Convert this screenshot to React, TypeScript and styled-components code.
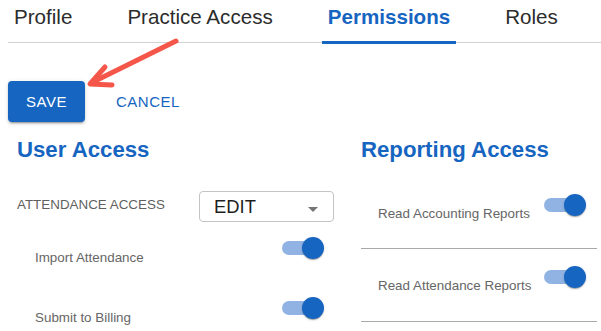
import React from "react"
import styled, { createGlobalStyle } from "styled-components"

const BLUE = "#1665c1"

const GlobalStyle = createGlobalStyle`
  html, body {
    margin: 0;
    padding: 0;
    background: #fff;
  }
  body {
    font-family: "Liberation Sans", Arial, sans-serif;
  }
`

function App() {
  const tabs = ["Profile", "Practice Access", "Permissions", "Roles"]
  const activeTab = "Permissions"

  return (
    <Page>
      <GlobalStyle />
      <TabBar>
        {tabs.map((tab) => (
          <Tab key={tab} active={tab === activeTab}>
            {tab}
          </Tab>
        ))}
      </TabBar>

      <ArrowMark width="105" height="55" viewBox="0 0 105 55">
        <g
          fill="none"
          stroke="#f4574a"
          strokeWidth="5"
          strokeLinecap="round"
          strokeLinejoin="round"
        >
          <line x1="96" y1="6" x2="13" y2="47" />
          <polyline points="25,32 10,49 32,50" />
        </g>
      </ArrowMark>

      <Actions>
        <SaveButton>Save</SaveButton>
        <CancelButton>Cancel</CancelButton>
      </Actions>

      <Columns>
        <LeftColumn>
          <Heading>User Access</Heading>
          <AccessRow>
            <AccessLabel>Attendance Access</AccessLabel>
            <Select>
              <span>EDIT</span>
              <Caret />
            </Select>
          </AccessRow>
          <ToggleRow>
            <ToggleLabel>Import Attendance</ToggleLabel>
            <Switch />
          </ToggleRow>
          <ToggleRow>
            <ToggleLabel>Submit to Billing</ToggleLabel>
            <Switch />
          </ToggleRow>
        </LeftColumn>

        <RightColumn>
          <Heading>Reporting Access</Heading>
          <ReportRow first>
            <ToggleLabel>Read Accounting Reports</ToggleLabel>
            <Switch />
          </ReportRow>
          <ReportRow>
            <ToggleLabel>Read Attendance Reports</ToggleLabel>
            <Switch />
          </ReportRow>
        </RightColumn>
      </Columns>
    </Page>
  )
}

const Switch = () => (
  <SwitchRoot>
    <Track />
    <Thumb />
  </SwitchRoot>
)

const Page = styled.div`
  position: relative;
  width: 601px;
  height: 331px;
  overflow: hidden;
  padding-left: 8px;
  box-sizing: border-box;
`

const TabBar = styled.div`
  display: flex;
  gap: 43px;
  height: 42px;
  border-bottom: 1px solid #d2d2d2;
`

const Tab = styled.div<{ active?: boolean }>`
  position: relative;
  padding: 5px 6px 0 6px;
  font-size: 20.6px;
  line-height: 23px;
  font-weight: ${(p) => (p.active ? 700 : 400)};
  color: ${(p) => (p.active ? BLUE : "#2c2c2c")};

  &::after {
    content: "";
    display: ${(p) => (p.active ? "block" : "none")};
    position: absolute;
    left: 0;
    right: 0;
    bottom: -2px;
    height: 3px;
    background: ${BLUE};
  }
`

const ArrowMark = styled.svg`
  position: absolute;
  left: 80px;
  top: 35px;
`

const Actions = styled.div`
  display: flex;
  align-items: center;
  margin-top: 38px;
`

const SaveButton = styled.button`
  width: 77px;
  height: 41px;
  border: none;
  border-radius: 4px;
  background: ${BLUE};
  color: #fff;
  font-family: inherit;
  font-size: 15px;
  letter-spacing: 0.5px;
  text-transform: uppercase;
  box-shadow: 0 3px 1px -2px rgba(0, 0, 0, 0.2), 0 2px 2px 0 rgba(0, 0, 0, 0.14),
    0 1px 5px 0 rgba(0, 0, 0, 0.12);
  padding: 0;
`

const CancelButton = styled.button`
  margin-left: 23px;
  padding: 0 8px;
  height: 36px;
  border: none;
  background: transparent;
  color: ${BLUE};
  font-family: inherit;
  font-size: 15px;
  letter-spacing: 0.5px;
  text-transform: uppercase;
`

const Columns = styled.div`
  display: grid;
  grid-template-columns: 332px 237px;
  column-gap: 20px;
  margin-top: 15px;
`

const LeftColumn = styled.div`
  padding: 0 6px 0 9px;
`

const RightColumn = styled.div`
  padding-left: 1px;
`

const Heading = styled.h2`
  margin: 0;
  font-size: 22.2px;
  line-height: 26px;
  font-weight: 700;
  color: ${BLUE};
`

const AccessRow = styled.div`
  display: flex;
  align-items: flex-start;
  margin-top: 28px;
`

const AccessLabel = styled.div`
  width: 182px;
  flex-shrink: 0;
  margin-top: 6px;
  font-size: 13.4px;
  line-height: 15px;
  color: #5f5f5f;
  text-transform: uppercase;
`

const Select = styled.div`
  display: flex;
  align-items: center;
  justify-content: space-between;
  box-sizing: border-box;
  flex-shrink: 0;
  width: 135px;
  height: 31px;
  padding: 0 15px 0 14px;
  border: 1px solid #c4c4c4;
  border-radius: 4px;
  font-size: 18.4px;
  color: #1e1e1e;
`

const Caret = styled.span`
  width: 0;
  height: 0;
  margin-top: 6px;
  border-left: 5px solid transparent;
  border-right: 5px solid transparent;
  border-top: 5px solid #757575;
`

const ToggleRow = styled.div`
  display: flex;
  align-items: flex-start;
  justify-content: space-between;
  height: 60px;
  padding: 0 10px 0 18px;
  ${AccessRow} + & {
    margin-top: 15px;
  }
`

const ReportRow = styled.div<{ first?: boolean }>`
  display: flex;
  align-items: flex-start;
  justify-content: space-between;
  box-sizing: border-box;
  height: ${(p) => (p.first ? "86px" : "73px")};
  padding: ${(p) => (p.first ? "31px" : "17px")} 11px 0 17px;
  border-bottom: 1px solid #a9a9a9;

  & > div:first-child {
    margin-top: 12px;
  }
`

const ToggleLabel = styled.div`
  margin-top: 12.5px;
  font-size: 13.4px;
  line-height: 15px;
  color: #666;
`

const SwitchRoot = styled.span`
  position: relative;
  display: inline-flex;
  align-items: center;
  width: 42px;
  height: 22px;
  flex-shrink: 0;
`

const Track = styled.span`
  width: 36px;
  height: 14px;
  border-radius: 7px;
  background: #90b3e3;
`

const Thumb = styled.span`
  position: absolute;
  right: 0;
  top: 0;
  width: 22px;
  height: 22px;
  border-radius: 50%;
  background: ${BLUE};
  box-shadow: 0 2px 1px -1px rgba(0, 0, 0, 0.2), 0 1px 1px 0 rgba(0, 0, 0, 0.14),
    0 1px 3px 0 rgba(0, 0, 0, 0.12);
`

export default App
